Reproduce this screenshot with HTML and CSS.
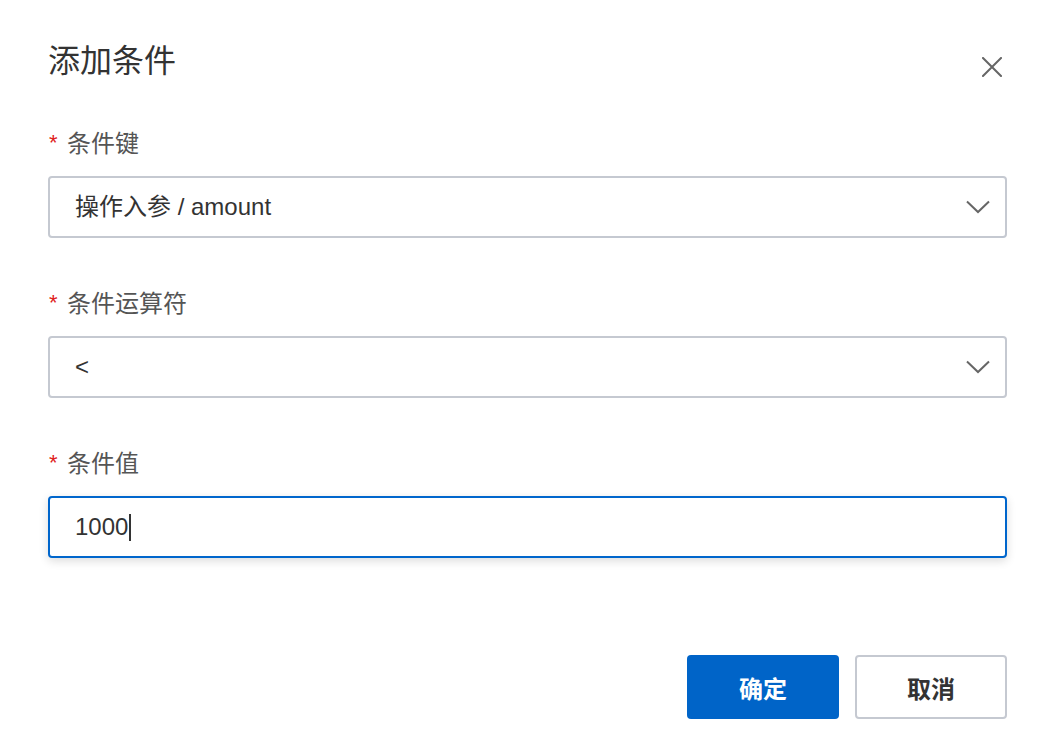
FILE: index.html
```html
<!DOCTYPE html>
<html lang="zh-CN">
<head>
<meta charset="utf-8">
<title>添加条件</title>
<link rel="stylesheet" href="styles.css">
</head>
<body>
<div class="dialog">
  <div class="dialog-header">
    <div class="dialog-title">添加条件</div>
    <div class="close-btn" aria-label="关闭">
      <svg width="20" height="20" viewBox="0 0 20 20"><path d="M1 1 L19 19 M19 1 L1 19" stroke="#666" stroke-width="2" fill="none" stroke-linecap="square"/></svg>
    </div>
  </div>
  <div class="form">
    <div class="form-item">
      <div class="form-label"><span class="req">*</span>条件键</div>
      <div class="field select">
        <span class="field-text cjk">操作入参 / amount</span>
        <svg class="chevron" width="24" height="14" viewBox="0 0 24 14"><path d="M1 1.5 L12 12 L23 1.5" stroke="#666" stroke-width="2" fill="none"/></svg>
      </div>
    </div>
    <div class="form-item">
      <div class="form-label"><span class="req">*</span>条件运算符</div>
      <div class="field select">
        <span class="field-text">&lt;</span>
        <svg class="chevron" width="24" height="14" viewBox="0 0 24 14"><path d="M1 1.5 L12 12 L23 1.5" stroke="#666" stroke-width="2" fill="none"/></svg>
      </div>
    </div>
    <div class="form-item">
      <div class="form-label"><span class="req">*</span>条件值</div>
      <div class="field input focused">
        <span class="field-text">1000</span><span class="caret"></span>
      </div>
    </div>
  </div>
  <div class="dialog-footer">
    <div class="btn btn-primary">确定</div>
    <div class="btn btn-default">取消</div>
  </div>
</div>
</body>
</html>
```

FILE: styles.css
```css
html, body {
  margin: 0;
  padding: 0;
  background: #ffffff;
}
body {
  font-family: "Liberation Sans", "Noto Sans CJK SC", sans-serif;
  color: #333333;
}
.dialog {
  width: 959px;
  padding: 0 43px 0 48px;
}
.dialog-header {
  display: flex;
  justify-content: space-between;
  align-items: flex-start;
  padding-top: 40px;
}
.dialog-title {
  font-size: 32px;
  line-height: 42px;
  color: #333333;
}
.close-btn {
  width: 20px;
  height: 20px;
  margin-top: 17px;
  margin-right: 5px;
}
.close-btn svg { display: block; }
.form {
  margin-top: 46px;
  display: flex;
  flex-direction: column;
  gap: 50px;
}
.form-item {
  display: flex;
  flex-direction: column;
  gap: 16px;
}
.form-label {
  font-size: 24px;
  line-height: 32px;
  color: #555555;
  display: flex;
  align-items: center;
}
.req {
  color: #e02020;
  font-size: 22px;
  font-weight: 400;
  width: 18px;
  margin-left: 1px;
  position: relative;
  top: -1px;
}
.field {
  box-sizing: border-box;
  height: 62px;
  border: 2px solid #c5c9d1;
  border-radius: 4px;
  display: flex;
  align-items: center;
  padding: 0 15px 0 25px;
  font-size: 24px;
  color: #333333;
}
.select {
  justify-content: space-between;
}
.field-text.cjk {
  padding-bottom: 5px;
}
.chevron { display: block; }
.focused {
  border-color: #0066cc;
  box-shadow: 0 3px 10px rgba(0, 0, 0, 0.14);
}
.caret {
  display: inline-block;
  width: 2px;
  height: 27px;
  background: #333333;
  margin-left: 1px;
}
.dialog-footer {
  margin-top: 97px;
  display: flex;
  justify-content: flex-end;
  gap: 16px;
}
.btn {
  box-sizing: border-box;
  width: 152px;
  height: 64px;
  border-radius: 4px;
  display: flex;
  align-items: center;
  justify-content: center;
  font-size: 24px;
  font-weight: 700;
}
.btn-primary {
  background: #0064c8;
  color: #ffffff;
}
.btn-default {
  border: 2px solid #c5c9d1;
  color: #333333;
  background: #ffffff;
}
```
